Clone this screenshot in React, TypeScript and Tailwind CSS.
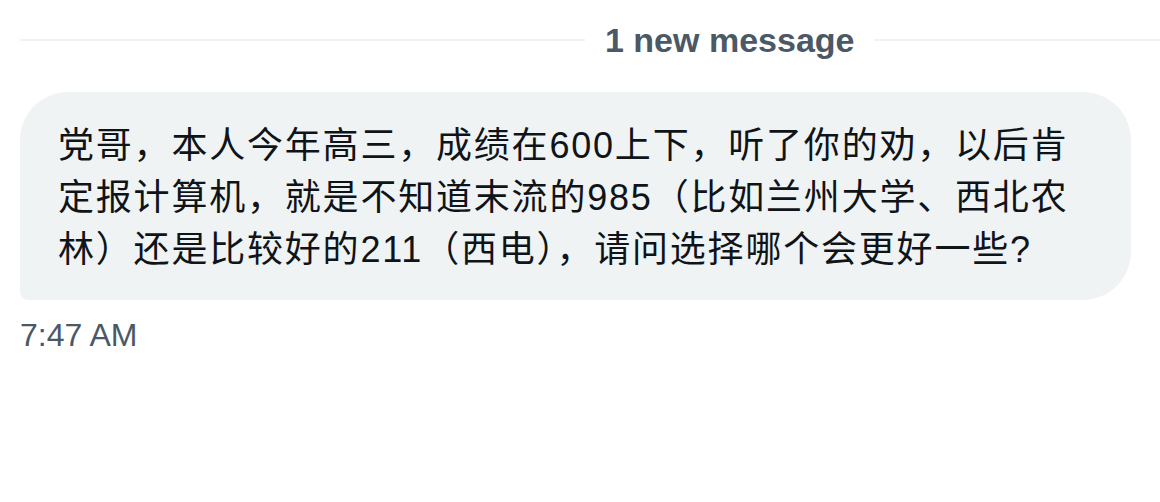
export default function App() {
  return (
    <div className="min-h-[502px] w-[1160px] overflow-hidden bg-white pl-[20px] pt-[20px] font-['Liberation_Sans','Noto_Sans_CJK_SC',sans-serif]">
      <div className="flex items-center">
        <div className="h-[2px] w-[565px] shrink-0 bg-[#eff3f4]" />
        <span className="shrink-0 px-[20px] text-[34px] font-bold leading-[40px] text-[#4b5866]">
          1 new message
        </span>
        <div className="h-[2px] flex-1 bg-[#eff3f4]" />
      </div>

      <div className="mt-[32px] w-[1111px] rounded-[48px] rounded-bl-[8px] bg-[#eff3f4] pl-[38px] pt-[28px] pb-[24px] text-[36px] leading-[52px] tracking-[1.8px] text-[#0f1419]">
        <p className="whitespace-nowrap">党哥，本人今年高三，成绩在600上下，听了你的劝，以后肯</p>
        <p className="whitespace-nowrap">定报计算机，就是不知道末流的985（比如兰州大学、西北农</p>
        <p className="whitespace-nowrap">林）还是比较好的211（西电），请问选择哪个会更好一些?</p>
      </div>

      <div className="mt-[17px] text-[32px] leading-[36px] text-[#4b5866]">7:47 AM</div>
    </div>
  );
}
